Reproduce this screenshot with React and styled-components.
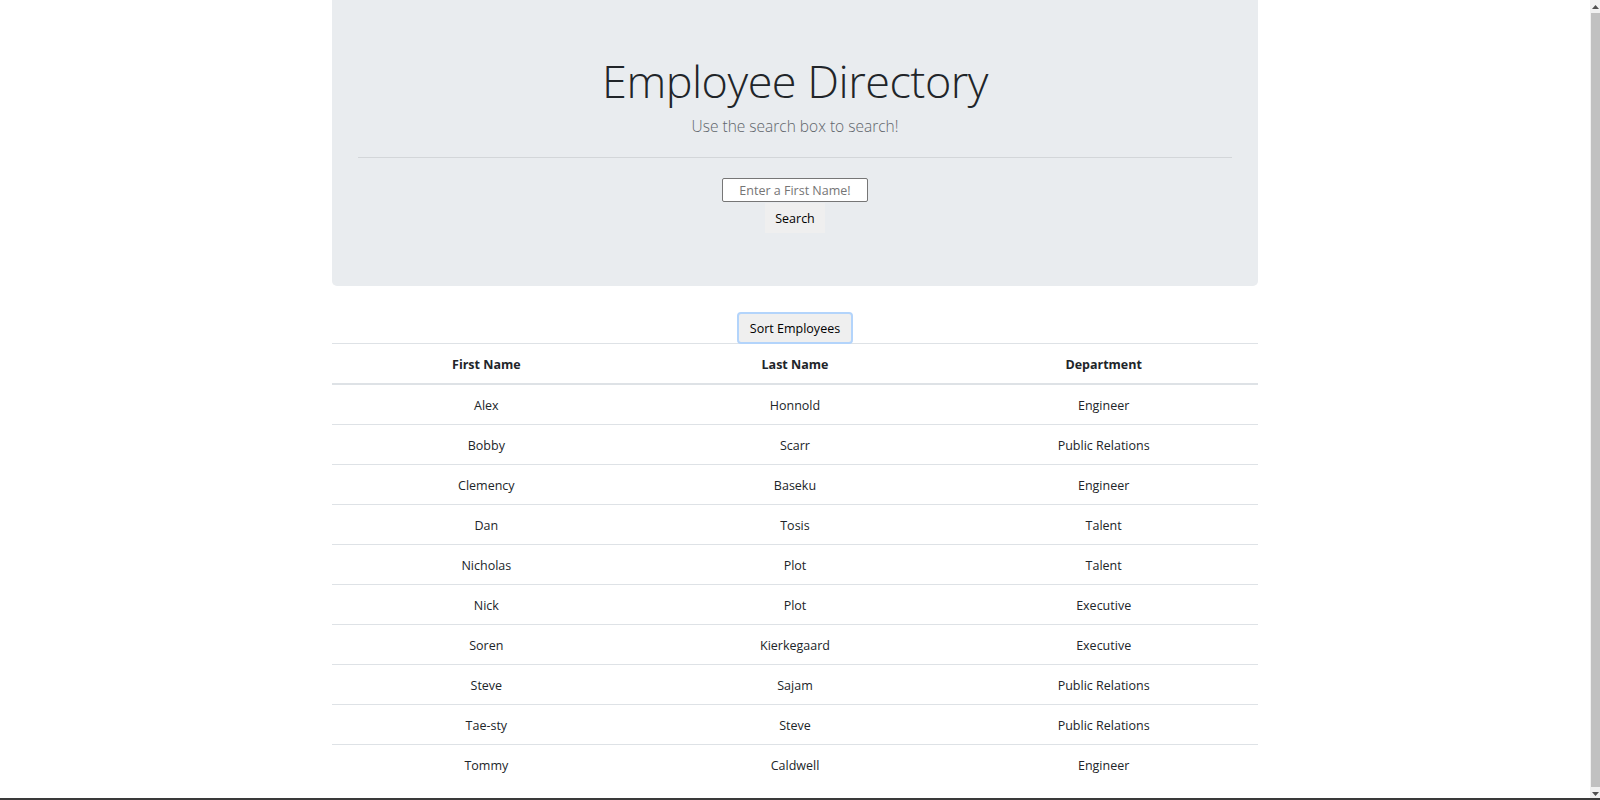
import React, { useState } from 'react';
import styled, { createGlobalStyle } from 'styled-components';

const GlobalStyle = createGlobalStyle`
  html, body {
    margin: 0;
    padding: 0;
    overflow: hidden;
    background: #ffffff;
  }
  body {
    font-family: "Open Sans", "Noto Sans", Arial, sans-serif;
    color: #212529;
  }
`

const Page = styled.div`
  margin-right: 10px;
  height: 100vh;
`

const Container = styled.div`
  width: 926px;
  margin: 0 auto;
`

const Jumbotron = styled.div`
  background: #e9ecef;
  border-radius: 0 0 5px 5px;
  padding: 54px 26px 0;
  height: 286px;
  box-sizing: border-box;
  text-align: center;
`

const Title = styled.h1`
  margin: 0 0 6px;
  font-size: 45px;
  font-weight: 300;
  line-height: 54px;
  letter-spacing: -0.5px;
  color: #212529;
`

const Lead = styled.p`
  margin: 0;
  font-size: 15.5px;
  font-weight: 300;
  line-height: 24px;
  color: #5f656b;
`

const Divider = styled.hr`
  margin: 19px 0 20px;
  border: 0;
  border-top: 1px solid #d3d6d9;
`

const SearchForm = styled.form`
  display: flex;
  flex-direction: column;
  align-items: center;
`

const SearchInput = styled.input`
  width: 146px;
  height: 24px;
  box-sizing: border-box;
  border: 1px solid #767676;
  border-radius: 2px;
  background: #ffffff;
  text-align: center;
  font-family: inherit;
  font-size: 12.5px;
  padding: 0 4px;
  outline: none;
  &::placeholder {
    color: #757575;
  }
`

const PlainButton = styled.button`
  background: #efefef;
  border: ${p => (p.focused ? '2px solid #b3d4fb' : '0')};
  border-radius: ${p => (p.focused ? '4px' : '0')};
  font-family: inherit;
  font-size: 12.5px;
  color: #000000;
  cursor: pointer;
  padding: 0;
  width: ${p => p.w}px;
  height: ${p => p.h}px;
  margin-top: ${p => p.gap || 0}px;
  box-sizing: border-box;
`

const SortBar = styled.div`
  display: flex;
  justify-content: center;
  margin-top: 26px;
  position: relative;
  z-index: 1;
  margin-bottom: -1px;
`

const Table = styled.table`
  width: 100%;
  table-layout: fixed;
  border-collapse: collapse;
  font-size: 12.5px;
  color: #212529;
`

const HeadCell = styled.th`
  padding: 11px 8px 9px;
  line-height: 19px;
  font-weight: 700;
  text-align: center;
  border-top: 1px solid #dee2e6;
  border-bottom: 2px solid #dee2e6;
`

const Cell = styled.td`
  padding: 11px 8px 9px;
  line-height: 19px;
  text-align: center;
  border-top: 1px solid #dee2e6;
`

const ScrollTrack = styled.div`
  position: fixed;
  top: 0;
  right: 0;
  width: 10px;
  height: 100vh;
  background: #f1f1f1;
  display: flex;
  flex-direction: column;
  align-items: center;
`

const ScrollArrow = styled.div`
  height: 13px;
  display: flex;
  align-items: center;
  justify-content: center;
`

const ScrollThumb = styled.div`
  flex: 1;
  width: 9px;
  margin-left: 1px;
  background: #c1c1c1;
`

const Taskbar = styled.div`
  position: fixed;
  left: 0;
  bottom: 0;
  width: 100%;
  height: 2px;
  background: #3a3a3a;
`

const employees = [
  ['Alex', 'Honnold', 'Engineer'],
  ['Bobby', 'Scarr', 'Public Relations'],
  ['Clemency', 'Baseku', 'Engineer'],
  ['Dan', 'Tosis', 'Talent'],
  ['Nicholas', 'Plot', 'Talent'],
  ['Nick', 'Plot', 'Executive'],
  ['Soren', 'Kierkegaard', 'Executive'],
  ['Steve', 'Sajam', 'Public Relations'],
  ['Tae-sty', 'Steve', 'Public Relations'],
  ['Tommy', 'Caldwell', 'Engineer'],
];

const Arrow = ({ up }) => (
  <svg width="7" height="4" viewBox="0 0 7 4">
    <polygon points={up ? '3.5,0 7,4 0,4' : '0,0 7,0 3.5,4'} fill="#505050" />
  </svg>
);

function App() {
  const [query, setQuery] = useState('');

  return (
    <Page>
      <GlobalStyle />
      <Container>
        <Jumbotron>
          <Title>Employee Directory</Title>
          <Lead>Use the search box to search!</Lead>
          <Divider />
          <SearchForm onSubmit={e => e.preventDefault()}>
            <SearchInput
              placeholder="Enter a First Name!"
              value={query}
              onChange={e => setQuery(e.target.value)}
            />
            <PlainButton type="submit" w={60} h={30} gap={1}>Search</PlainButton>
          </SearchForm>
        </Jumbotron>

        <SortBar>
          <PlainButton focused w={116} h={32}>Sort Employees</PlainButton>
        </SortBar>

        <Table>
          <thead>
            <tr>
              <HeadCell>First Name</HeadCell>
              <HeadCell>Last Name</HeadCell>
              <HeadCell>Department</HeadCell>
            </tr>
          </thead>
          <tbody>
            {employees.map(([first, last, dept]) => (
              <tr key={first}>
                <Cell>{first}</Cell>
                <Cell>{last}</Cell>
                <Cell>{dept}</Cell>
              </tr>
            ))}
          </tbody>
        </Table>
      </Container>

      <ScrollTrack>
        <ScrollArrow><Arrow up /></ScrollArrow>
        <ScrollThumb />
        <ScrollArrow><Arrow /></ScrollArrow>
      </ScrollTrack>
      <Taskbar />
    </Page>
  );
}

export default App;
